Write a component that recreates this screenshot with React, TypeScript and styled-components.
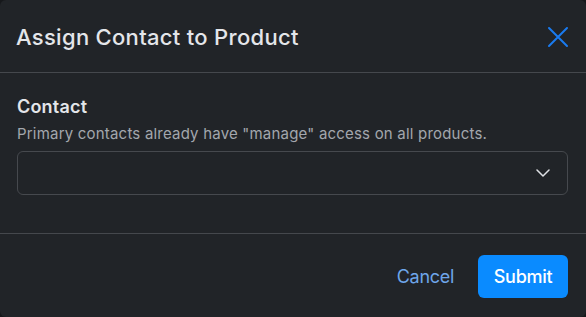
import React from "react";
import styled, { createGlobalStyle } from "styled-components";

const Global = createGlobalStyle`
  html, body { margin: 0; padding: 0; background: #16181b; }
  body { font-family: Inter, "Liberation Sans", Arial, sans-serif; }
  * { box-sizing: border-box; }
`;

const Modal = styled.div`
  width: 586px;
  height: 317px;
  background: #212428;
  border-radius: 6px;
  display: flex;
  flex-direction: column;
  overflow: hidden;
`;

const Header = styled.div`
  height: 73px;
  display: flex;
  align-items: center;
  justify-content: space-between;
  padding: 1px 16px 0 16px;
  border-bottom: 1px solid #45484d;
`;

const Title = styled.h2`
  margin: 0;
  font-size: 22px;
  font-weight: 500;
  color: #e4e6ea;
  letter-spacing: 0.3px;
`;

const CloseButton = styled.button`
  width: 24px;
  height: 24px;
  padding: 0;
  border: none;
  background: transparent;
  color: #1a7bf0;
  display: flex;
  align-items: center;
  justify-content: center;
  cursor: pointer;
`;

const Body = styled.div`
  padding: 23px 18px 0 17px;
  height: 161px;
  border-bottom: 1px solid #45484d;
`;

const Label = styled.div`
  font-size: 18px;
  font-weight: 600;
  color: #e4e6ea;
  line-height: 22px;
  letter-spacing: 0.2px;
`;

const Hint = styled.div`
  margin-top: 6px;
  font-size: 15px;
  color: #a3a7ad;
  line-height: 20px;
  letter-spacing: 0.2px;
`;

const Select = styled.div`
  margin-top: 7px;
  height: 44px;
  border: 1px solid #46494e;
  border-radius: 6px;
  display: flex;
  align-items: center;
  justify-content: flex-end;
  padding-right: 17px;
  color: #dfe1e5;
`;

const Footer = styled.div`
  flex: 1;
  display: flex;
  align-items: center;
  justify-content: flex-end;
  gap: 24px;
  padding: 2px 18px 0;
`;

const TextButton = styled.button`
  border: none;
  background: transparent;
  color: #6ea6ea;
  font-family: inherit;
  font-size: 18px;
  letter-spacing: -0.3px;
  padding: 0;
  cursor: pointer;
`;

const PrimaryButton = styled.button`
  width: 90px;
  height: 43px;
  border: none;
  border-radius: 6px;
  background: #0a8bff;
  color: #ffffff;
  font-family: inherit;
  font-size: 18px;
  font-weight: 500;
  letter-spacing: -0.3px;
  cursor: pointer;
`;

export default function App() {
  return (
    <>
      <Global />
      <Modal>
        <Header>
          <Title>Assign Contact to Product</Title>
          <CloseButton aria-label="Close">
            <svg width="22" height="22" viewBox="0 0 22 22" fill="none">
              <path d="M2 2 L20 20 M20 2 L2 20" stroke="currentColor" strokeWidth="2" strokeLinecap="round" />
            </svg>
          </CloseButton>
        </Header>
        <Body>
          <Label>Contact</Label>
          <Hint>Primary contacts already have "manage" access on all products.</Hint>
          <Select>
            <svg width="14" height="8" viewBox="0 0 14 8" fill="none">
              <path d="M1 1 L7 7 L13 1" stroke="currentColor" strokeWidth="1.5" strokeLinecap="round" strokeLinejoin="round" />
            </svg>
          </Select>
        </Body>
        <Footer>
          <TextButton>Cancel</TextButton>
          <PrimaryButton>Submit</PrimaryButton>
        </Footer>
      </Modal>
    </>
  );
}
